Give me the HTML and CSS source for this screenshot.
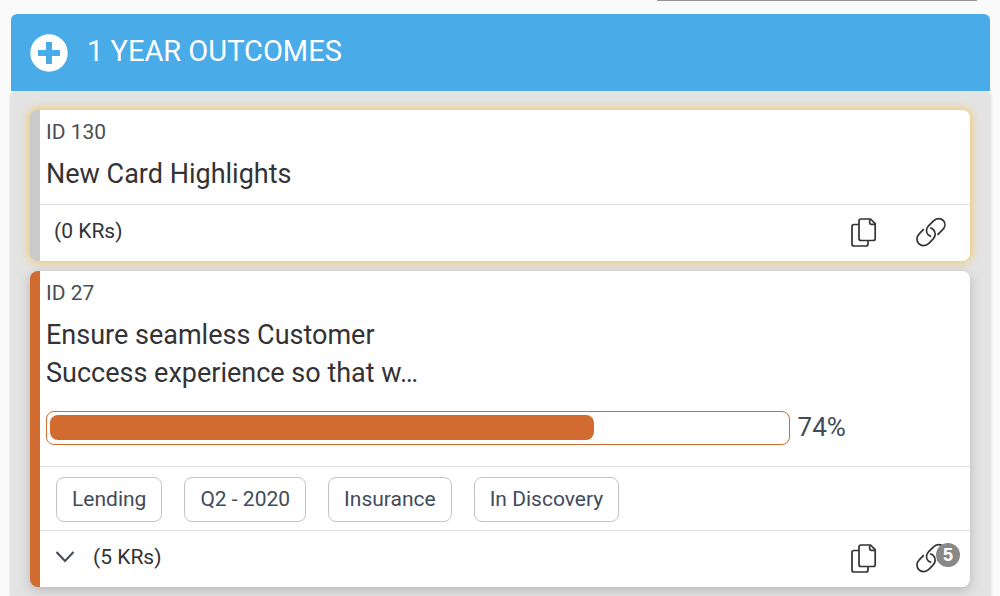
FILE: index.html
```html
<!DOCTYPE html>
<html lang="en">
<head>
<meta charset="utf-8">
<meta name="viewport" content="width=device-width, initial-scale=1">
<title>1 Year Outcomes</title>
<link rel="stylesheet" href="styles.css">
</head>
<body>
<svg class="defs" aria-hidden="true">
  <symbol id="copy" viewBox="0 0 28 30">
    <path d="M9 6.500H4Q2 6.500 2 8.500V26Q2 28 4 28H16Q18 28 18 26V22.500"/>
    <path d="M11 1H20.500L25.200 5.700V20.500Q25.200 22.500 23.200 22.500H11Q9 22.500 9 20.500V3Q9 1 11 1Z"/>
    <path d="M19.700 1.500V4.800Q19.700 6.300 21.200 6.300H25"/>
  </symbol>
  <symbol id="link" viewBox="0 0 32 32">
    <path d="M8.800 12.200L4.200 16.800C1.400 19.600 1.200 24 3.800 26.700C6.500 29.400 11 29.200 13.800 26.400L18 22.200C20.800 19.400 21 15.400 18.400 12.700C17.600 11.900 16.500 11.200 15.200 10.900"/>
    <path d="M22.500 17.800L27.700 12.600C30.500 9.800 30.700 6 28.200 3.400C25.600 .700 21.400 1 18.600 3.800L13.700 8.700C10.900 11.500 10.700 15.400 13.300 17.900C14 18.600 15 19.200 16.200 19.500"/>
  </symbol>
</svg>
<div class="rule"></div>
<main class="column">
  <header class="column-head">
    <button class="add" type="button" aria-label="Add outcome">
      <svg viewBox="0 0 38 38"><circle cx="19" cy="19" r="18.700" fill="#fff"/><path d="M19 8v22M8 19h22" stroke="#4aabe9" stroke-width="6"/></svg>
    </button>
    <h1 class="heading">1 YEAR OUTCOMES</h1>
  </header>
  <section class="cards">
    <article class="card card-new">
      <div class="summary">
        <div class="id">ID 130</div>
        <h2 class="title">New Card Highlights</h2>
      </div>
      <footer class="foot">
        <span class="krs">(0 KRs)</span>
        <button class="icon-button" type="button" aria-label="Copy"><svg class="copy"><use href="#copy"/></svg></button>
        <button class="icon-button" type="button" aria-label="Links"><svg class="link"><use href="#link"/></svg></button>
      </footer>
    </article>
    <article class="card card-orange">
      <div class="summary">
        <div class="id">ID 27</div>
        <h2 class="title">Ensure seamless Customer Success experience so that w…</h2>
        <div class="progress-row">
          <div class="progress" role="progressbar" aria-label="Progress" aria-valuenow="74" aria-valuemin="0" aria-valuemax="100"><div class="fill" style="width:74%"></div></div>
          <span class="percent">74%</span>
        </div>
      </div>
      <div class="tags">
        <span class="tag">Lending</span>
        <span class="tag">Q2 - 2020</span>
        <span class="tag">Insurance</span>
        <span class="tag">In Discovery</span>
      </div>
      <footer class="foot">
        <button class="expand" type="button" aria-label="Expand key results"><svg viewBox="0 0 20 14"><path d="M1.500 2L10 11L18.500 2"/></svg></button>
        <span class="krs">(5 KRs)</span>
        <button class="icon-button" type="button" aria-label="Copy"><svg class="copy"><use href="#copy"/></svg></button>
        <button class="icon-button" type="button" aria-label="Links, 5"><svg class="link"><use href="#link"/></svg><span class="badge">5</span></button>
      </footer>
    </article>
  </section>
</main>
</body>
</html>
```
FILE: styles.css
```css
* { box-sizing: border-box; }
body {
  margin: 0;
  min-height: 100vh;
  display: flex;
  flex-direction: column;
  background: #fafafa;
  color: #333335;
  font-family: Roboto, sans-serif;
}
button {
  display: flex;
  padding: 0;
  border: 0;
  background: none;
  color: inherit;
  font: inherit;
  cursor: pointer;
}
.defs { display: none; }
.rule {
  width: 32%;
  height: 1px;
  margin: 0 23px 13px auto;
  background: #959595;
}
.column {
  flex: 1;
  display: flex;
  flex-direction: column;
  margin: 0 9px 0 10px;
}
.column-head {
  z-index: 1;
  display: flex;
  align-items: center;
  gap: 19px;
  min-height: 77px;
  margin: 0 1px;
  padding: 0 19px;
  border-radius: 6px 6px 0 0;
  background: #4aabe9;
  color: #fff;
}
.add svg { width: 38px; height: 38px; }
.heading {
  margin: 0 0 4px;
  font-size: 29px;
  line-height: 34px;
  font-weight: 400;
}
.cards {
  flex: 1;
  display: flex;
  flex-direction: column;
  gap: 10px;
  padding: 19px 21px 9px 20px;
  border-radius: 6px 6px 0 0;
  background: #e3e3e3;
  box-shadow: 0 1px 3px #e0e0e0;
}
.card {
  border-left: 10px solid;
  border-radius: 8px;
  background: #fff;
}
.card-new {
  border-color: #cacaca;
  box-shadow: 0 0 8px 1px #f5c55f;
}
.card-orange {
  border-color: #d16b2f;
  box-shadow: 0 3px 12px rgba(0, 0, 0, 0.2);
}
.summary { padding: 8px 6px 11px; }
.id {
  color: #4d4d4f;
  font-size: 21px;
  line-height: 28px;
}
.title {
  max-width: 400px;
  margin: 9px 0 0;
  font-size: 27px;
  line-height: 38px;
  font-weight: 400;
}
.progress-row {
  display: flex;
  align-items: center;
  gap: 8px;
  margin: 19px 0 10px;
}
.progress {
  width: 81%;
  height: 34px;
  padding: 3px 3px 4px;
  border: 1px solid #d16b2f;
  border-radius: 8px;
}
.fill {
  height: 100%;
  border-radius: 8px;
  background: #d16b2f;
}
.percent {
  margin-bottom: 2px;
  color: #424b5a;
  font-size: 26px;
  line-height: 32px;
}
.tags {
  display: flex;
  flex-wrap: wrap;
  gap: 22px;
  padding: 10px 16px 8px;
  border-top: 1px solid #e0e0e0;
}
.tag {
  padding: 8px 15px 9px;
  border: 1px solid #c4c4c4;
  border-radius: 8px;
  color: #424b5a;
  font-size: 21px;
  line-height: 26px;
}
.foot {
  display: flex;
  align-items: center;
  min-height: 57px;
  padding: 0 23px 0 14px;
  border-top: 1px solid #e0e0e0;
}
.krs {
  margin: 0 auto 5px 0;
  font-size: 21px;
  line-height: 26px;
}
.expand { margin: 0 18px 5px 1px; }
.expand svg {
  width: 20px;
  height: 14px;
  fill: none;
  stroke: #424b5a;
  stroke-width: 2;
}
.icon-button {
  position: relative;
  margin-left: 37px;
}
.copy, .link {
  fill: none;
  stroke: #333335;
  stroke-width: 1.700;
}
.copy { width: 28px; height: 30px; }
.link { width: 32px; height: 32px; }
.badge {
  position: absolute;
  top: 0;
  right: -13px;
  width: 24px;
  height: 24px;
  border-radius: 50%;
  background: #888;
  color: #fff;
  font-family: "Liberation Sans", Arial, sans-serif;
  font-size: 18px;
  line-height: 24px;
  font-weight: 700;
  text-align: center;
}
```
